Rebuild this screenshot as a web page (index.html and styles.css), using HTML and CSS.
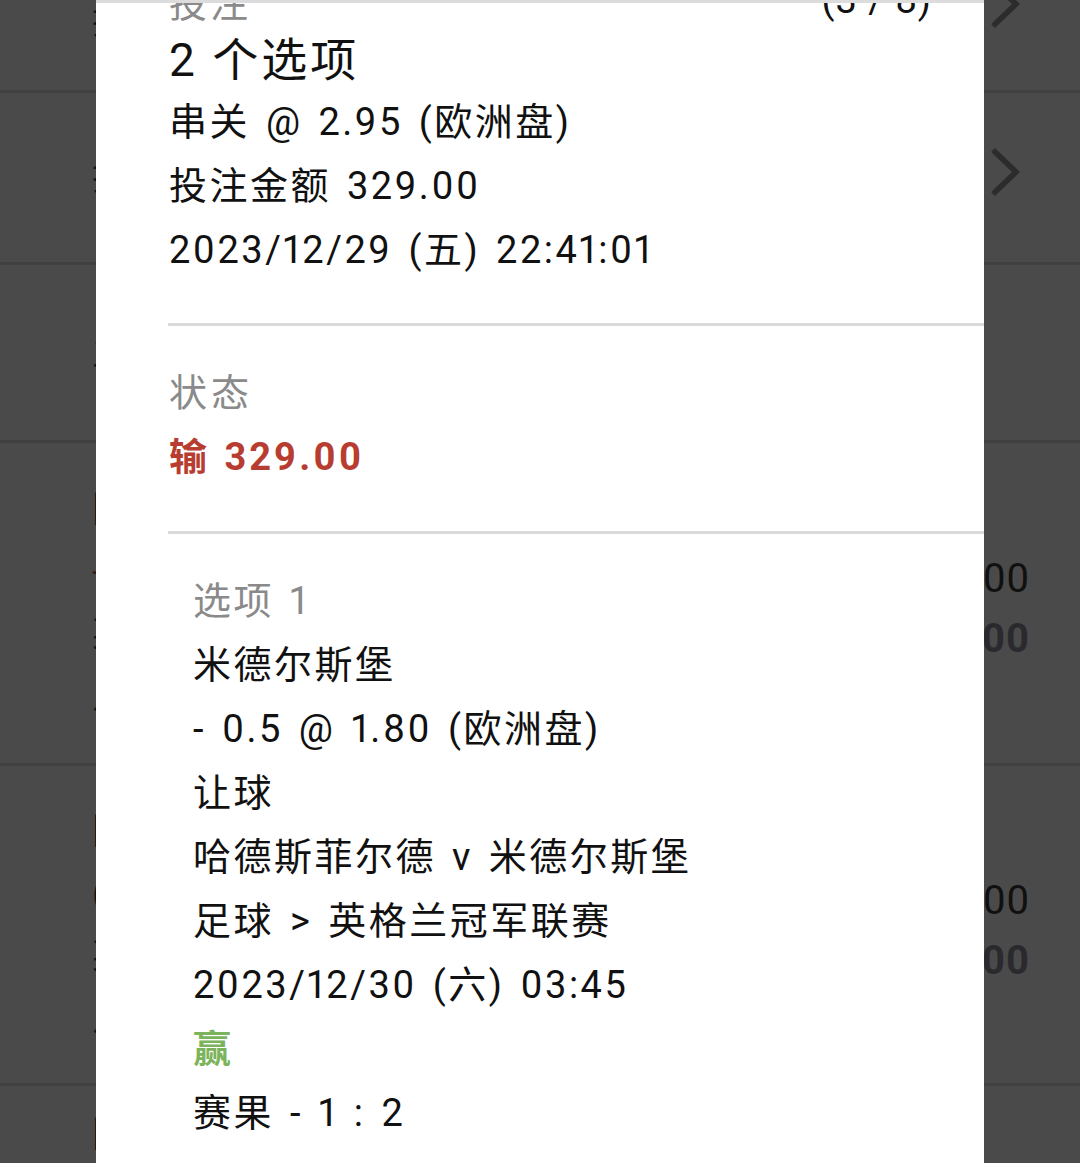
FILE: index.html
```html
<!DOCTYPE html>
<html lang="zh-CN">
<head>
<meta charset="utf-8">
<title>投注详情</title>
<link rel="stylesheet" href="styles.css">
</head>
<body>
<div class="page">
  <div class="bg-list">
    <div class="bg-row row-a">
      <div class="bg-left"><div class="bg-text">投注详情</div></div>
      <svg class="chev chev-a" viewBox="0 0 30 50" width="30" height="50"><path d="M3 3 L26 25 L3 47" fill="none" stroke="#2c2c2c" stroke-width="5.5"/></svg>
    </div>
    <div class="bg-row row-b">
      <div class="bg-left"><div class="bg-text">投注记录</div></div>
      <svg class="chev chev-b" viewBox="0 0 30 50" width="30" height="50"><path d="M3 3 L26 25 L3 47" fill="none" stroke="#2c2c2c" stroke-width="5.5"/></svg>
    </div>
    <div class="bg-row row-c">
      <div class="bg-left"><div class="bg-text">主页</div></div>
    </div>
    <div class="bg-row row-d">
      <div class="bg-left">
        <div class="bg-text">国际赛事</div>
        <div class="bg-text red">- 0.5</div>
        <div class="bg-text">英格兰</div>
        <div class="bg-text">足球</div>
      </div>
      <div class="bg-right">
        <div class="bg-num">329.00</div>
        <div class="bg-num bold">0.00</div>
      </div>
    </div>
    <div class="bg-row row-e">
      <div class="bg-left">
        <div class="bg-text">国际赛事</div>
        <div class="bg-text">(欧洲盘)</div>
        <div class="bg-text">英格兰</div>
        <div class="bg-text">足球</div>
      </div>
      <div class="bg-right">
        <div class="bg-num">200.00</div>
        <div class="bg-num bold">0.00</div>
      </div>
    </div>
    <div class="bg-row row-f">
      <div class="bg-left"><div class="bg-text">国际赛事</div></div>
    </div>
  </div>

  <div class="modal">
    <div class="modal-scroll">
      <div class="section summary">
        <div class="head-row">
          <span class="muted">投注</span>
          <span class="count">(3 / 8)</span>
        </div>
        <div class="title">2 个选项</div>
        <div class="line">串关 @ 2.95 (欧洲盘)</div>
        <div class="line">投注金额 329.00</div>
        <div class="line">2023/12/29 (五) 22:41:01</div>
      </div>
      <div class="section status">
        <div class="line muted label">状态</div>
        <div class="line lose">输 329.00</div>
      </div>
      <div class="section leg">
        <div class="line muted">选项 1</div>
        <div class="line">米德尔斯堡</div>
        <div class="line">- 0.5 @ 1.80 (欧洲盘)</div>
        <div class="line">让球</div>
        <div class="line">哈德斯菲尔德 v 米德尔斯堡</div>
        <div class="line">足球 &gt; 英格兰冠军联赛</div>
        <div class="line">2023/12/30 (六) 03:45</div>
        <div class="line win">赢</div>
        <div class="line">赛果 - 1 : 2</div>
      </div>
    </div>
  </div>
</div>
</body>
</html>
```

FILE: styles.css
```css
html, body {
  margin: 0;
  padding: 0;
}
body {
  width: 1080px;
  height: 1163px;
  overflow: hidden;
  background: #4a4a4a;
  font-family: "Roboto", "Noto Sans CJK SC", sans-serif;
}
.page {
  position: relative;
  width: 1080px;
  height: 1163px;
  overflow: hidden;
}

/* dimmed page behind the dialog */
.bg-list {
  display: flex;
  flex-direction: column;
}
.bg-row {
  display: flex;
  justify-content: space-between;
  align-items: center;
  padding: 0 50px 0 92px;
  border-bottom: 3px solid #404040;
  box-sizing: border-box;
  overflow: hidden;
}
.row-a { height: 93px; align-items: flex-start; }
.row-b { height: 172px; }
.row-c { height: 178px; }
.row-d { height: 323px; }
.row-e { height: 320px; }
.row-f { height: 100px; }
.chev { display: block; margin-right: 10px; }
.chev-a { margin-top: -21px; }
.chev-b { margin-top: -12px; }
.bg-left {
  display: flex;
  flex-direction: column;
  gap: 18px;
}
.bg-text {
  font-size: 36px;
  color: #151515;
  line-height: 44px;
}
.bg-text.red { color: #3a1d1a; }
.bg-right {
  display: flex;
  flex-direction: column;
  align-items: flex-end;
  gap: 16px;
  margin-top: 12px;
}
.bg-num {
  font-size: 40px;
  line-height: 44px;
  color: #101010;
  letter-spacing: 1px;
}
.bg-num.bold {
  font-weight: 700;
  color: #2a2a2e;
}

/* dialog */
.modal {
  position: absolute;
  left: 96px;
  top: 0;
  width: 888px;
  height: 1163px;
  background: #ffffff;
  border-top: 3px solid #dcdcdc;
  box-sizing: border-box;
  overflow: hidden;
}
.modal-scroll {
  margin-top: -33px;
  display: flex;
  flex-direction: column;
}
.section {
  margin-left: 72px;
  padding: 35px 0 41px 1px;
  border-bottom: 3px solid #dadada;
  display: flex;
  flex-direction: column;
}
.section.summary { padding-top: 0; }
.section.status { padding-bottom: 42px; }
.section.leg {
  padding-left: 25px;
  border-bottom: none;
}
.head-row {
  display: flex;
  justify-content: space-between;
  align-items: center;
  height: 60px;
  padding-right: 52px;
  font-size: 38px;
  letter-spacing: 3px;
  color: #111;
}
.count { letter-spacing: 1px; }
.title {
  font-size: 46px;
  line-height: 60px;
  letter-spacing: 3px;
  color: #111;
}
.line {
  font-size: 38px;
  line-height: 64px;
  letter-spacing: 2.5px;
  word-spacing: 4px;
  font-variant-numeric: proportional-nums;
  color: #111;
  white-space: nowrap;
}
.line.label { letter-spacing: 4px; }
.muted { color: #8a8a8a; }
.lose {
  color: #b73d31;
  font-weight: 700;
  letter-spacing: 3px;
  word-spacing: 2px;
}
.win {
  color: #7bb45c;
  font-weight: 700;
}
```
